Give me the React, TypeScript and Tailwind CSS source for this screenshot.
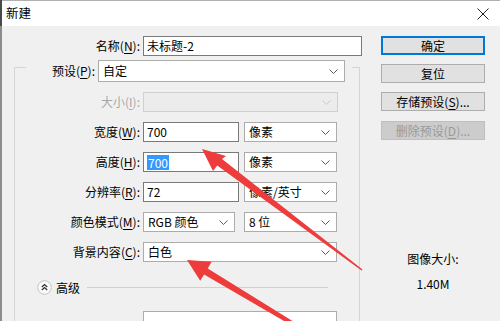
import React from "react"

const font = { fontFamily: '"Noto Sans CJK SC", "Noto Sans", sans-serif' }

function Chevron({ light }: { light?: boolean }) {
  return (
    <svg width="9" height="5" viewBox="0 0 9 5" className="shrink-0">
      <path d="M0.5 0.5 L4.5 4.5 L8.5 0.5" fill="none" stroke={light ? "#c8c8c8" : "#5a5a5a"} strokeWidth="1" />
    </svg>
  )
}

function Label({ text, u, disabled, w = "w-[128px]" }: { text: string; u: string; disabled?: boolean; w?: string }) {
  return (
    <div className={`${w} shrink-0 pr-[3px] text-right ${disabled ? "text-[#a8a8a8]" : "text-black"}`}>
      {text}(<span className="underline underline-offset-2">{u}</span>):
    </div>
  )
}

function Input({ value, w, selected }: { value: string; w: string; selected?: boolean }) {
  return (
    <div className={`${w} h-[20px] shrink-0 border border-[#7a7a7a] bg-white flex items-center pl-[3px]`}>
      {selected ? <span className="bg-[#3399ff] text-white px-[1px] leading-[15px]">{value}</span> : <span>{value}</span>}
    </div>
  )
}

function Select({ value, w, h = "h-[20px]", disabled }: { value: string; w: string; h?: string; disabled?: boolean }) {
  return (
    <div
      className={`${w} ${h} shrink-0 border flex items-center justify-between pl-[4px] pr-[6px] ${
        disabled ? "border-[#d0d0d0] bg-[#ececec]" : "border-[#acacac] bg-white"
      }`}
    >
      <span>{value}</span>
      <Chevron light={disabled} />
    </div>
  )
}

function Button({ text, u, suffix, focused, disabled }: { text: string; u?: string; suffix?: string; focused?: boolean; disabled?: boolean }) {
  return (
    <div
      className={`w-[104px] h-[19px] flex items-center justify-center ${
        focused
          ? "border-2 border-[#0078d7] bg-[#e1e1e1]"
          : disabled
          ? "border border-[#bfbfbf] bg-[#cccccc] text-[#9a9a9a]"
          : "border border-[#adadad] bg-[#e1e1e1]"
      }`}
    >
      {text}
      {u && (
        <>
          (<span className="underline underline-offset-2">{u}</span>)
        </>
      )}
      {suffix}
    </div>
  )
}

export default function App() {
  return (
    <div className="relative w-[500px] h-[321px] overflow-hidden bg-[#f0f0f0] text-[12px] leading-none text-black" style={font}>
      <div className="h-[26px] bg-white border-t border-[#b0b0b0] flex items-center justify-between pl-[6px] pr-[11px]">
        <span className="text-[12.5px]">新建</span>
        <svg width="12" height="12" viewBox="0 0 12 12">
          <path d="M0.5 0.5 L11.5 11.5 M11.5 0.5 L0.5 11.5" stroke="#222" strokeWidth="1" />
        </svg>
      </div>

      <div className="flex">
        <div className="w-[381px] shrink-0">
          <div className="mt-[10px] flex items-center">
            <Label text="名称" u="N" w="w-[143px]" />
            <Input value="未标题-2" w="w-[219px]" />
          </div>

          <div className="mt-[11px] ml-[14px] w-[346px] h-[300px] border-l border-t border-r border-[#d5d5d5]">
            <div className="-mt-[8px] ml-[11px] w-[326px] bg-[#f0f0f0] flex items-center">
              <Label text="预设" u="P" w="w-[72px]" />
              <Select value="自定" w="w-[247px]" h="h-[22px]" />
            </div>

            <div className="mt-[10px] flex items-center">
              <Label text="大小" u="I" disabled />
              <Select value="" w="w-[195px]" disabled />
            </div>

            <div className="mt-[10px] flex items-center">
              <Label text="宽度" u="W" />
              <Input value="700" w="w-[96px]" />
              <div className="ml-[5px]">
                <Select value="像素" w="w-[93px]" />
              </div>
            </div>

            <div className="mt-[10px] flex items-center">
              <Label text="高度" u="H" />
              <Input value="700" w="w-[96px]" selected />
              <div className="ml-[5px]">
                <Select value="像素" w="w-[93px]" />
              </div>
            </div>

            <div className="mt-[10px] flex items-center">
              <Label text="分辨率" u="R" />
              <Input value="72" w="w-[96px]" />
              <div className="ml-[5px]">
                <Select value="像素/英寸" w="w-[93px]" />
              </div>
            </div>

            <div className="mt-[10px] flex items-center">
              <Label text="颜色模式" u="M" />
              <Select value="RGB 颜色" w="w-[92px]" />
              <div className="ml-[9px]">
                <Select value="8 位" w="w-[93px]" />
              </div>
            </div>

            <div className="mt-[10px] flex items-center">
              <Label text="背景内容" u="C" />
              <Select value="白色" w="w-[194px]" />
            </div>

            <div className="mt-[18px] ml-[22px] flex items-center">
              <svg width="15" height="15" viewBox="0 0 15 15" className="shrink-0">
                <circle cx="7.5" cy="7.5" r="6.8" fill="#fafafa" stroke="#c4c4c4" />
                <path d="M4.8 7 L7.5 4.6 L10.2 7 M4.8 10 L7.5 7.6 L10.2 10" fill="none" stroke="#333" strokeWidth="1.3" />
              </svg>
              <span className="ml-[4px]">高级</span>
              <div className="ml-[7px] w-[241px] h-px bg-[#d0d0d0]" />
            </div>

            <div className="mt-[16px] ml-[128px] w-[194px] h-[20px] border border-[#acacac] bg-white" />
          </div>
        </div>

        <div className="w-[104px] shrink-0 mt-[10px] flex flex-col">
          <Button text="确定" focused />
          <div className="mt-[9px]">
            <Button text="复位" />
          </div>
          <div className="mt-[9px]">
            <Button text="存储预设" u="S" suffix="..." />
          </div>
          <div className="mt-[10px]">
            <Button text="删除预设" u="D" suffix="..." disabled />
          </div>
          <div className="mt-[113px] flex flex-col items-center gap-[13px]">
            <span>图像大小:</span>
            <span>1.40M</span>
          </div>
        </div>
      </div>

      {/* window edge behind the dialog */}
      <div className="absolute left-0 top-0 w-[2px] h-full bg-[#8c8c8c]" />
      <div className="absolute left-0 top-0 w-[2px] h-[26px] bg-[#4a4a4a]" />

      <svg className="absolute inset-0 pointer-events-none" width="500" height="321" viewBox="0 0 500 321">
        <polygon
          points="202,149 226,156 222,159 362.5,269.4 361.5,270.6 217.2,165.4 213,171"
          fill="#ee3b3b"
        />
        <polygon
          points="187,260 211.6,261.7 207.7,268.4 301,326.3 299,329.7 204.1,274.4 200.2,280.8"
          fill="#ee3b3b"
        />
      </svg>
    </div>
  )
}
